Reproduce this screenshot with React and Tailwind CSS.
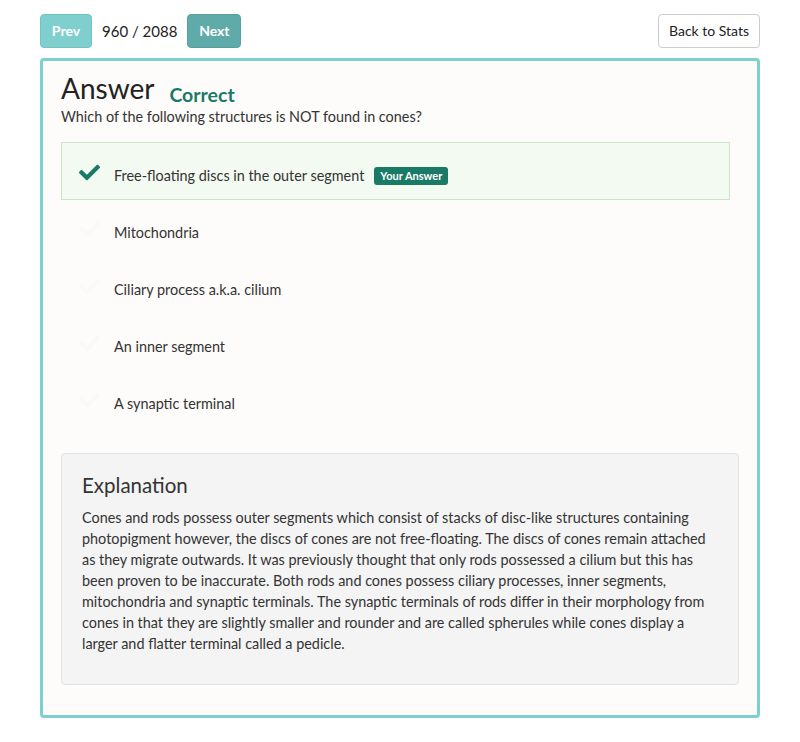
import React from 'react';

const options = [
  { id: 1, text: 'Free-floating discs in the outer segment', selected: true },
  { id: 2, text: 'Mitochondria' },
  { id: 3, text: 'Ciliary process a.k.a. cilium' },
  { id: 4, text: 'An inner segment' },
  { id: 5, text: 'A synaptic terminal' },
];

const explanation = [
  'Cones and rods possess outer segments which consist of stacks of disc-like structures containing',
  'photopigment however, the discs of cones are not free-floating. The discs of cones remain attached',
  'as they migrate outwards. It was previously thought that only rods possessed a cilium but this has',
  'been proven to be inaccurate. Both rods and cones possess ciliary processes, inner segments,',
  'mitochondria and synaptic terminals. The synaptic terminals of rods differ in their morphology from',
  'cones in that they are slightly smaller and rounder and are called spherules while cones display a',
  'larger and flatter terminal called a pedicle.',
];

const Check = ({ className }) => (
  <svg viewBox="0 0 512 512" className={className} fill="currentColor">
    <path d="M173.9 439.4l-166.4-166.4c-10-10-10-26.2 0-36.2l36.2-36.2c10-10 26.2-10 36.2 0L192 312.7 432.1 72.6c10-10 26.2-10 36.2 0l36.2 36.2c10 10 10 26.2 0 36.2l-294.4 294.4c-10 10-26.2 10-36.2 0z" />
  </svg>
);

export default function App() {
  return (
    <div className="min-h-screen bg-white px-10 pt-[14px] pb-6 text-[#333]" style={{ fontFamily: 'Lato, "Open Sans", sans-serif' }}>
      {/* barre du haut */}
      <div className="flex items-center justify-between">
        <div className="flex items-center">
          <button className="h-[34px] w-[52px] rounded bg-[#80cfcf] border border-[#74c3c3] text-white text-sm font-bold">Prev</button>
          <span className="mx-[10px] text-[15px] text-[#222]">960 / 2088</span>
          <button className="h-[34px] w-[54px] rounded bg-[#5faba9] border border-[#56a09e] text-white text-sm font-bold">Next</button>
        </div>
        <button className="h-[34px] w-[102px] rounded border border-[#cccccc] bg-white text-sm text-[#222]">Back to Stats</button>
      </div>

      {/* carte principale */}
      <div className="mt-[10px] rounded border-[3px] border-[#7ecfcf] bg-[#fdfcfa] px-[18px] pt-[9px] pb-[30px]">
        <div className="flex items-baseline">
          <h1 className="text-[28px] leading-[36px] text-[#222]">Answer</h1>
          <span className="ml-[15px] text-[19.5px] font-bold text-[#1a7a66] relative top-[3px]">Correct</span>
        </div>
        <p className="text-[14.4px] leading-[18px] mt-[2px] text-[#333]">Which of the following structures is NOT found in cones?</p>

        <div className="mt-[16px] mr-[9px]">
          {options.map((opt) => (
            <div
              key={opt.id}
              className={`flex items-center border pt-[9px] ${opt.selected ? 'h-[58px] bg-[#f3faf1] border-[#cbe5c6]' : 'h-[57px] border-transparent'}`}
            >
              <div className="w-[52px] flex justify-end pr-[14px] pb-[7px]">
                <Check className={`w-[21px] h-[21px] ${opt.selected ? 'text-[#1a7a66]' : 'text-[#f9f9f7]'}`} />
              </div>
              <span className="text-[14.4px] text-[#333]">{opt.text}</span>
              {opt.selected && (
                <span className="ml-[10px] rounded-[3px] bg-[#1a7a66] px-[6px] py-[2px] text-[11px] font-bold leading-[14px] text-white">Your Answer</span>
              )}
            </div>
          ))}
        </div>

        {/* explication */}
        <div className="mt-[25px] rounded border border-[#e3e3e3] bg-[#f4f4f4] px-[20px] pt-[18px] pb-[30px]">
          <h2 className="text-[20.5px] leading-[26px] text-[#333]">Explanation</h2>
          <p className="mt-[9px] text-[14.4px] leading-[21px] text-[#333]">
            {explanation.map((line, i) => (
              <React.Fragment key={i}>
                {line}
                {i < explanation.length - 1 && <br />}
              </React.Fragment>
            ))}
          </p>
        </div>
      </div>
    </div>
  );
}
